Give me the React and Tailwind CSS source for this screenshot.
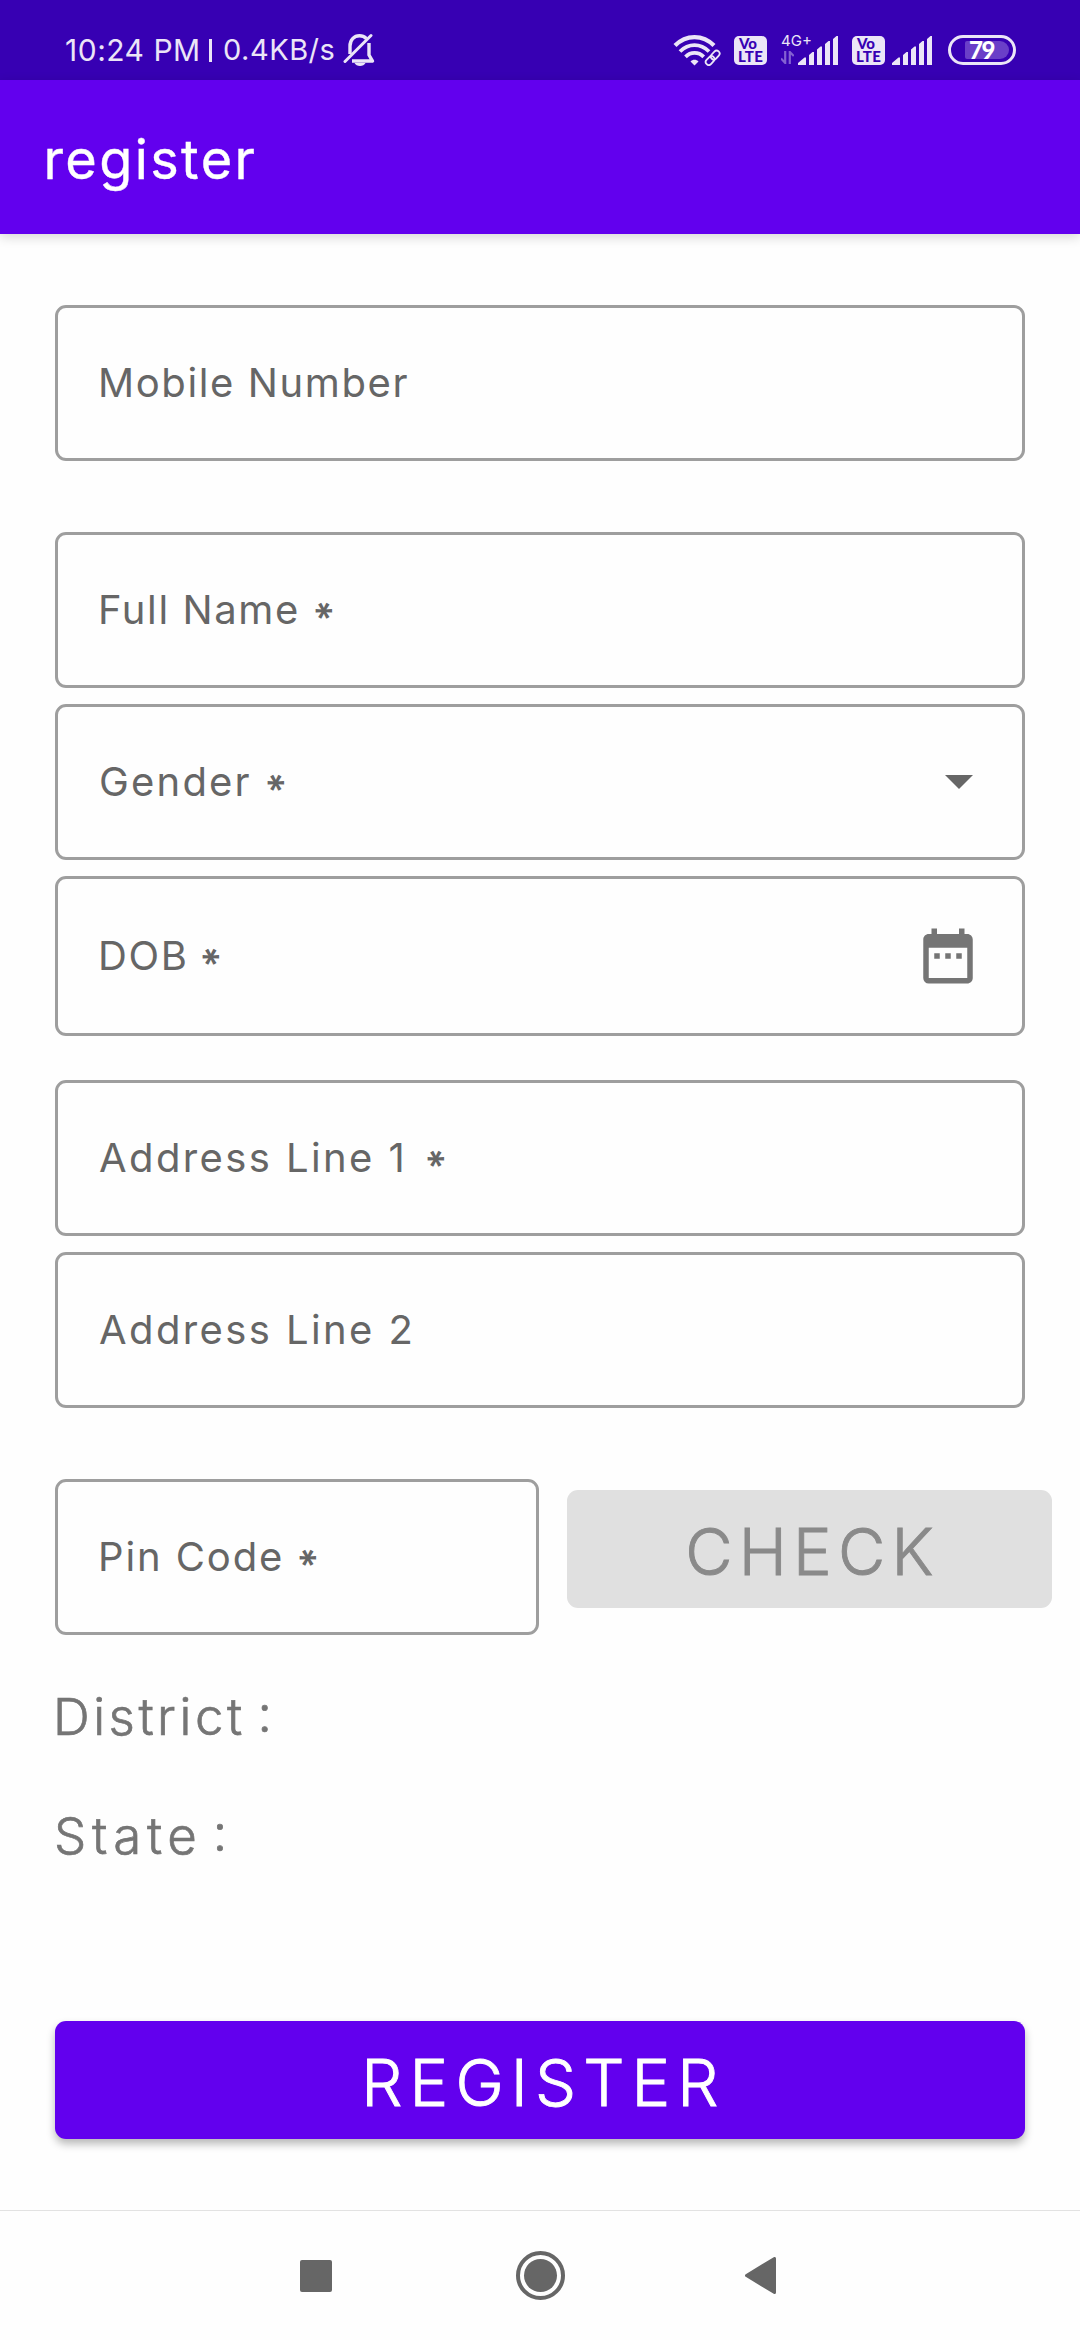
import React from "react";
import { MdDateRange } from "react-icons/md";

function BellOff() {
  return (
    <svg className="ml-[9px] h-[34px] w-[32px]" viewBox="0 0 32 34" fill="none" stroke="#ebe5f7" strokeWidth="3.4">
      <path d="M7 21V13C7 7 11 2.8 16.5 2.8c2.8 0 5 .9 6.8 2.6M26 10v12l3.5 6H9" strokeLinejoin="round" />
      <path d="M2 28.5 28 2.5" strokeLinecap="round" strokeWidth="3" />
      <path d="M11.5 30h11c-1 2-3 3-5.5 3s-4.500-1-5.500-3z" fill="#ebe5f7" stroke="none" />
    </svg>
  );
}

function WifiLink() {
  return (
    <svg className="h-[32px] w-[48px]" viewBox="0 0 48 32" fill="none" stroke="#ebe5f7">
      <path d="M2 11.500C13 .2 30 .2 41 11.500" strokeWidth="4.200" />
      <path d="M7 17.500c8.500-8.500 20.500-8.500 29 0" strokeWidth="3.800" />
      <path d="M12.500 22.800c5.200-5.200 13-5.200 18.200 0" strokeWidth="3.800" />
      <path d="M17.500 27.500c2-2.500 6-2.500 8 0L21.500 31.500z" fill="#ebe5f7" stroke="none" />
      <g transform="rotate(-47 39.500 24)" strokeWidth="1.800">
        <rect x="31" y="21" width="10" height="6" rx="3" />
        <rect x="38.500" y="21" width="10" height="6" rx="3" />
      </g>
    </svg>
  );
}

function Volte() {
  return (
    <div className="flex h-[29px] w-[33px] flex-col items-center justify-center rounded-[5px] bg-[#ebe5f7] font-['Lato'] text-[15px] leading-[13px] font-black text-[#3700b3]">
      <span className="mr-[5px]">Vo</span>
      <span className="tracking-[0.300px]">LTE</span>
    </div>
  );
}

function Signal() {
  return (
    <svg className="h-[29px] w-[40px]" viewBox="0 0 40 29" fill="#ebe5f7">
      <path d="M0 29v-2l6.500-5.500H8V29zM11 29V19l3.500-3H16v13zM19 29V13.500l3.500-3H24V29zM27 29V8l3.500-3H32v24zM35 29V3l3.500-3H40v29z" />
    </svg>
  );
}

function StatusBar() {
  return (
    <div className="flex h-[80px] items-center bg-[#3700b3] pt-[20px] pl-[65px] text-[30px] text-[#ebe5f7]">
      <span className="w-[136px] tracking-[0.500px] whitespace-nowrap">10:24 PM</span>
      <span className="ml-[8px] h-[23px] w-[2.500px] bg-[#ebe5f7]" />
      <span className="ml-[11.500px] w-[111px] text-[29px] tracking-[0.500px] whitespace-nowrap">0.4KB/s</span>
      <BellOff />
      <div className="ml-[298px] flex items-center">
        <WifiLink />
        <div className="ml-[13px]"><Volte /></div>
        <div className="ml-[14px] flex h-[32px] w-[17px] flex-col">
          <span className="h-[14px] text-[15px] leading-[14px] whitespace-nowrap">4G+</span>
          <svg className="mt-[3px] h-[13px] w-[13px]" viewBox="0 0 13 13" fill="none" stroke="#8461d2" strokeWidth="2.200">
            <path d="M4.200 0v12L0 7.500M8.800 13V1l4 4" />
          </svg>
        </div>
        <Signal />
        <div className="ml-[14px]"><Volte /></div>
        <div className="ml-[7px]"><Signal /></div>
        <div className="ml-[16px] flex h-[30px] w-[68px] items-center justify-end rounded-full border-[3px] border-[#ebe5f7] pr-[4px]">
          <div className="flex h-[18px] w-[44px] items-center rounded-l-[2px] rounded-r-[9px] bg-[#6a3fc8] pl-[4px] font-['Lato'] text-[24px] leading-none font-black tracking-[-1.500px] text-white">79</div>
        </div>
      </div>
    </div>
  );
}

function Star({ className }) {
  return <span className={"inline-block w-[20px] rotate-90 text-center leading-[20px] font-semibold " + className}>*</span>;
}

function Field({ className, label, labelClass, star, children }) {
  return (
    <div className={"flex items-center rounded-[11px] border-[3px] border-[#9e9e9e] text-[40px] leading-[48px] text-[#666] " + className}>
      <span className={"whitespace-nowrap " + labelClass}>{label}</span>
      {star && <Star className={star} />}
      {children}
    </div>
  );
}

export default function App() {
  return (
    <div className="flex h-[2340px] w-[1080px] flex-col overflow-hidden bg-[#fefefe] font-['Inter',sans-serif]">
      <StatusBar />
      <header className="flex h-[154px] items-center bg-[#6200ee] pt-[4px] pl-[43.500px] text-[54px] tracking-[2.400px] text-white shadow-[0_3px_11px_rgba(0,0,0,0.160)] [-webkit-text-stroke:0.4px_currentColor]">
        register
      </header>

      <main className="flex flex-col px-[55px] pt-[71px]">
        <Field className="h-[156px]" label="Mobile Number" labelClass="ml-[40px] tracking-[1.600px]" />
        <Field className="mt-[71px] h-[156px]" label="Full Name" labelClass="ml-[40px] tracking-[1.600px]" star="ml-[7px]" />
        <Field className="mt-[16px] h-[156px]" label="Gender" labelClass="ml-[41px] tracking-[2.200px]" star="ml-[7px]">
          <svg className="mr-[49px] ml-auto h-[14px] w-[28px]" viewBox="0 0 28 14" fill="#666"><path d="M0 0h28L14 14z" /></svg>
        </Field>
        <Field className="mt-[16px] h-[160px]" label="DOB" labelClass="ml-[40px] tracking-[1.600px]" star="ml-[6px]">
          <MdDateRange className="mr-[41px] ml-auto h-[66px] w-[66px] text-[#757575]" />
        </Field>
        <Field className="mt-[44px] h-[156px]" label="Address Line 1" labelClass="ml-[41px] tracking-[2.400px]" star="ml-[12px]" />
        <Field className="mt-[16px] h-[156px]" label="Address Line 2" labelClass="ml-[41px] tracking-[2.400px]" />

        <div className="mt-[71px] flex h-[156px] w-[997px]">
          <Field className="w-[484px] shrink-0" label="Pin Code" labelClass="ml-[40px] tracking-[1.900px]" star="ml-[7px]" />
          <button className="mt-[11px] ml-[28px] h-[118px] w-[485px] shrink-0 rounded-[11px] bg-[#e0e0e0] pt-[4px] pl-[6px] text-[65px] leading-none font-light tracking-[6.200px] text-[#8a8a8a] [-webkit-text-stroke:0.9px_currentColor]">
            CHECK
          </button>
        </div>

        <div className="mt-[52px] flex h-[60px] items-center text-[51px] font-light text-[#757575] [-webkit-text-stroke:0.7px_currentColor]">
          <span className="-ml-[2px] tracking-[3.500px]">District</span>
          <span className="mb-[6px] ml-[12px]">:</span>
        </div>
        <div className="mt-[59px] flex h-[60px] items-center text-[51px] font-light text-[#757575] [-webkit-text-stroke:0.7px_currentColor]">
          <span className="-ml-[1px] tracking-[5.700px]">State</span>
          <span className="mb-[6px] ml-[10px]">:</span>
        </div>

        <button className="mt-[155px] h-[118px] w-[970px] rounded-[11px] bg-[#6200ee] pt-[4px] pl-[7px] text-[65px] leading-none font-light tracking-[7.100px] text-white shadow-[0_5px_8px_rgba(0,0,0,0.280)] [-webkit-text-stroke:0.9px_currentColor]">
          REGISTER
        </button>
      </main>

      <nav className="mt-auto flex h-[130px] items-center border-t border-[#e2e2e2] pl-[300px]">
        <span className="h-[32px] w-[32px] rounded-[2px] bg-[#666]" />
        <span className="ml-[184px] flex h-[49px] w-[49px] items-center justify-center rounded-full border-4 border-[#666]">
          <span className="h-[33px] w-[33px] shrink-0 rounded-full bg-[#666]" />
        </span>
        <svg className="ml-[180px] h-[37px] w-[31px]" viewBox="0 0 31 37" fill="#666" stroke="#666" strokeWidth="3" strokeLinejoin="round">
          <path d="M1.500 18.500 29.500 1.500v34z" />
        </svg>
      </nav>
    </div>
  );
}
